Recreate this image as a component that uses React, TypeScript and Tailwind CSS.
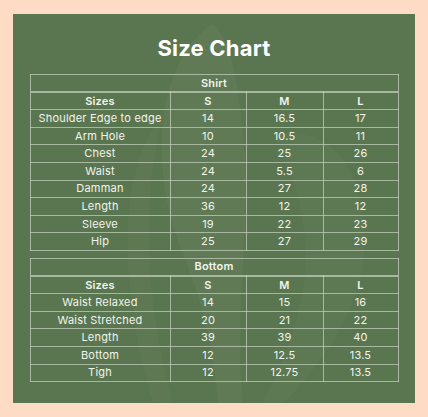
import React from "react";

const shirt = [
  ["Shoulder Edge to edge", "14", "16.5", "17"],
  ["Arm Hole", "10", "10.5", "11"],
  ["Chest", "24", "25", "26"],
  ["Waist", "24", "5.5", "6"],
  ["Damman", "24", "27", "28"],
  ["Length", "36", "12", "12"],
  ["Sleeve", "19", "22", "23"],
  ["Hip", "25", "27", "29"],
];

const bottom = [
  ["Waist Relaxed", "14", "15", "16"],
  ["Waist Stretched", "20", "21", "22"],
  ["Length", "39", "39", "40"],
  ["Bottom", "12", "12.5", "13.5"],
  ["Tigh", "12", "12.75", "13.5"],
];

function SizeTable({ title, rows }: { title: string; rows: string[][] }) {
  const cell = "border border-[#c9d3c0]/70 h-[17.6px] p-0 text-center leading-none";
  return (
    <table className="w-full border-collapse table-fixed text-[11px] text-[#f3f4ee] tracking-[0.2px]">
      <colgroup>
        <col className="w-[140px]" />
        <col className="w-[76px]" />
        <col className="w-[77px]" />
        <col />
      </colgroup>
      <thead>
        <tr>
          <th colSpan={4} className={`${cell} font-semibold border-b-2`}>{title}</th>
        </tr>
        <tr>
          <th className={`${cell} font-semibold`}>Sizes</th>
          <th className={`${cell} font-semibold`}>S</th>
          <th className={`${cell} font-semibold`}>M</th>
          <th className={`${cell} font-semibold`}>L</th>
        </tr>
      </thead>
      <tbody>
        {rows.map((r, i) => (
          <tr key={i}>
            {r.map((c, j) => (
              <td key={j} className={`${cell} font-normal`}>{c}</td>
            ))}
          </tr>
        ))}
      </tbody>
    </table>
  );
}

export default function App() {
  return (
    <div
      className="w-[428px] h-[417px] bg-[#fddbc4] pt-[14px] px-[13px]"
      style={{ fontFamily: "Inter, 'Open Sans', sans-serif" }}
    >
      <div className="relative h-[389px] bg-[#5a7650] overflow-hidden px-[16.5px] pt-[20px]">
        <svg className="absolute inset-0 pointer-events-none" width="402" height="389" viewBox="0 0 402 389">
          <path d="M200 10 C150 40 130 140 170 240 C190 290 200 330 205 389 L230 389 C220 300 240 200 230 120 C225 70 220 30 200 10 Z" fill="#ffffff" opacity="0.03" />
          <path d="M260 120 C320 110 360 160 350 250 C340 310 300 360 270 389 L250 389 C280 330 300 270 290 210 C285 170 270 140 260 120 Z" fill="#ffffff" opacity="0.025" />
          <path d="M150 100 C110 150 100 250 140 389 L160 389 C130 280 130 180 150 100 Z" fill="#ffffff" opacity="0.02" />
        </svg>
        <div className="relative">
          <h1 className="text-center text-[22px] font-bold text-white leading-[28px] tracking-[0.2px]">Size Chart</h1>
          <div className="mt-[12px]">
            <SizeTable title="Shirt" rows={shirt} />
          </div>
          <div className="mt-[7px]">
            <SizeTable title="Bottom" rows={bottom} />
          </div>
        </div>
      </div>
    </div>
  );
}
